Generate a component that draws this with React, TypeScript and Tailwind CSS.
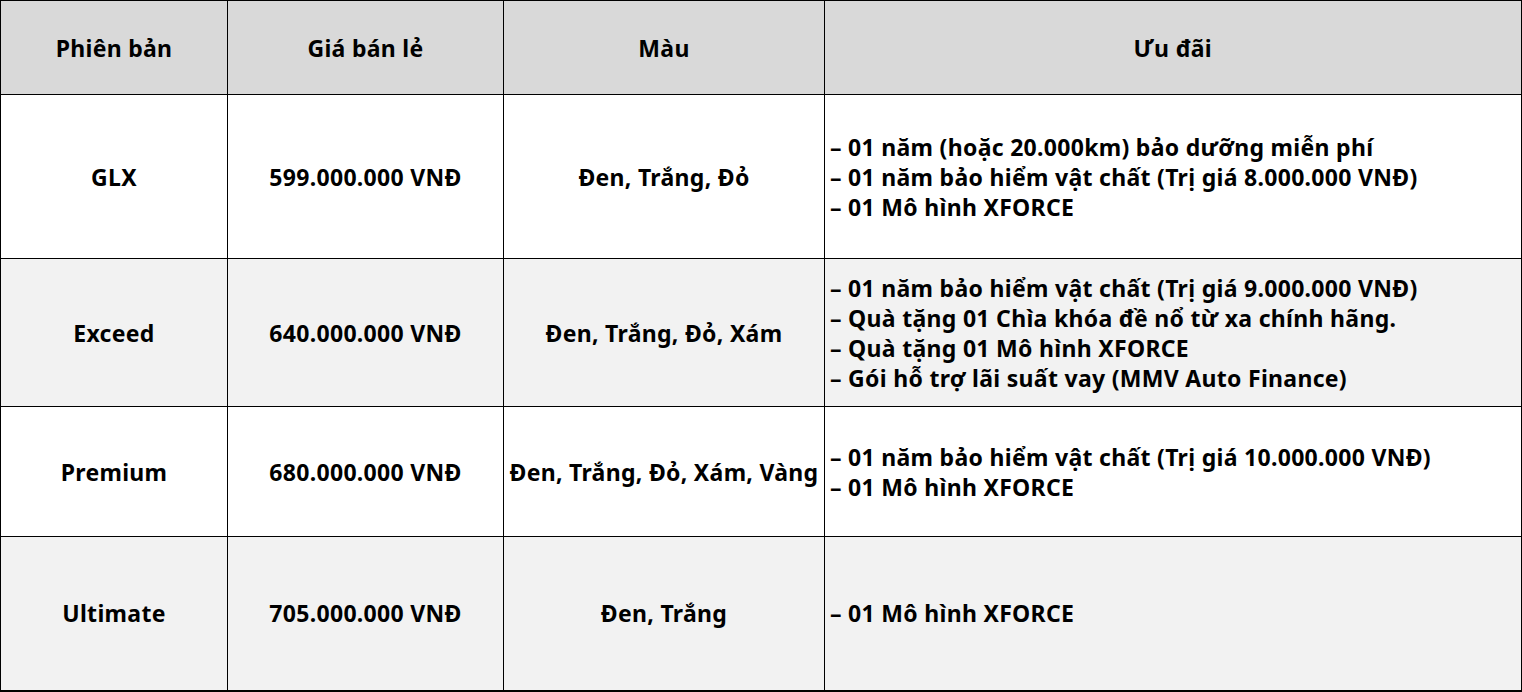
const rows = [
  {
    name: 'GLX',
    price: '599.000.000 VNĐ',
    colors: 'Đen, Trắng, Đỏ',
    offers: [
      '01 năm (hoặc 20.000km) bảo dưỡng miễn phí',
      '01 năm bảo hiểm vật chất (Trị giá 8.000.000 VNĐ)',
      '01 Mô hình XFORCE',
    ],
    h: 'h-[164px]',
    bg: 'bg-white',
  },
  {
    name: 'Exceed',
    price: '640.000.000 VNĐ',
    colors: 'Đen, Trắng, Đỏ, Xám',
    offers: [
      '01 năm bảo hiểm vật chất (Trị giá 9.000.000 VNĐ)',
      'Quà tặng 01 Chìa khóa đề nổ từ xa chính hãng.',
      'Quà tặng 01 Mô hình XFORCE',
      'Gói hỗ trợ lãi suất vay (MMV Auto Finance)',
    ],
    h: 'h-[148px]',
    bg: 'bg-[#f2f2f2]',
  },
  {
    name: 'Premium',
    price: '680.000.000 VNĐ',
    colors: 'Đen, Trắng, Đỏ, Xám, Vàng',
    offers: ['01 năm bảo hiểm vật chất (Trị giá 10.000.000 VNĐ)', '01 Mô hình XFORCE'],
    h: 'h-[130px]',
    bg: 'bg-white',
  },
  {
    name: 'Ultimate',
    price: '705.000.000 VNĐ',
    colors: 'Đen, Trắng',
    offers: ['01 Mô hình XFORCE'],
    h: 'h-[154px]',
    bg: 'bg-[#f2f2f2]',
  },
];

const cell = 'border border-black text-center align-middle p-0';

export default function App() {
  return (
    <div className="w-[1522px] h-[692px] bg-white text-black font-['Noto_Sans','Open_Sans',sans-serif] font-bold text-[23px] leading-[30px] tracking-[0.3px]">
      <table className="table-fixed border-collapse w-[1521px] border-r-2 border-b-2 border-black">
        <colgroup>
          <col className="w-[227px]" />
          <col className="w-[276px]" />
          <col className="w-[321px]" />
          <col className="w-[697px]" />
        </colgroup>
        <thead>
          <tr className="h-[94px] bg-[#d9d9d9]">
            <th className={cell + ' font-bold'}>Phiên bản</th>
            <th className={cell + ' font-bold'}>Giá bán lẻ</th>
            <th className={cell + ' font-bold'}>Màu</th>
            <th className={cell + ' font-bold'}>Ưu đãi</th>
          </tr>
        </thead>
        <tbody>
          {rows.map((r) => (
            <tr key={r.name} className={`${r.h} ${r.bg}`}>
              <td className={cell}>{r.name}</td>
              <td className={cell}>{r.price}</td>
              <td className={cell + ' whitespace-nowrap'}>{r.colors}</td>
              <td className="border border-black align-middle text-left pl-[5px]">
                {r.offers.map((o) => (
                  <div key={o} className="whitespace-nowrap">
                    – {o}
                  </div>
                ))}
              </td>
            </tr>
          ))}
        </tbody>
      </table>
    </div>
  );
}
